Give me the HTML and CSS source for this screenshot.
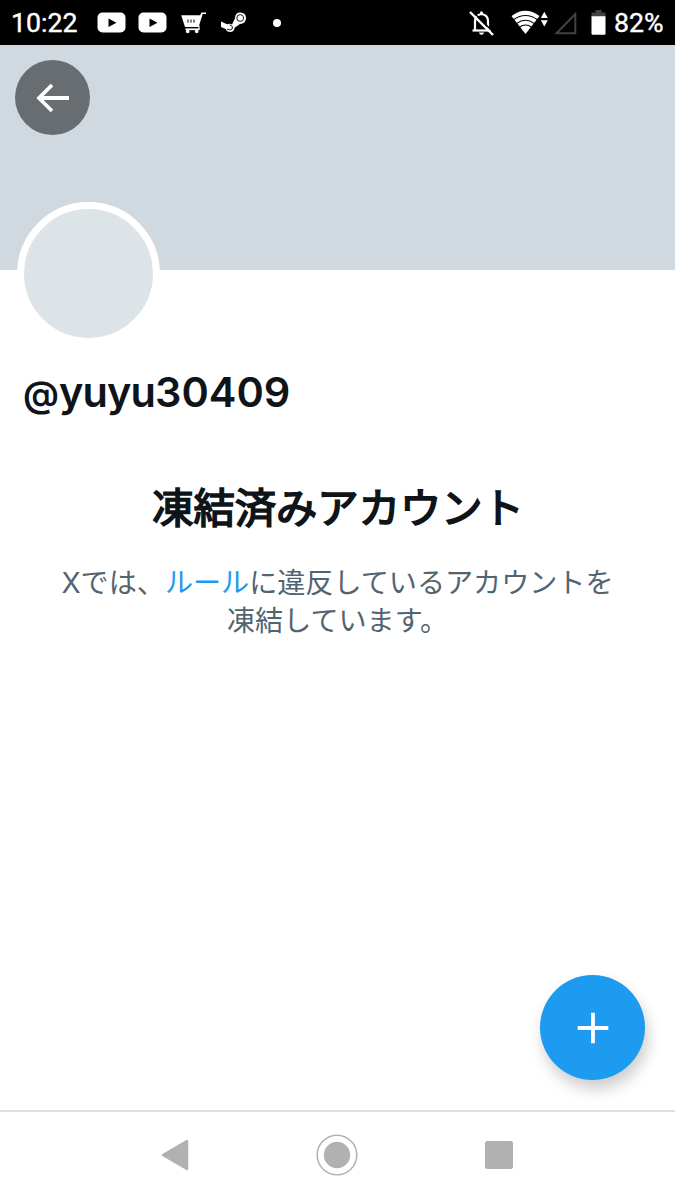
FILE: index.html
```html
<!DOCTYPE html>
<html lang="ja">
<head>
    <meta charset="UTF-8">
    <meta name="viewport" content="width=device-width, initial-scale=1.0">
    <title>@yuyu30409</title>
    <link rel="stylesheet" href="styles.css">
</head>
<body>
    <div class="screen">
        <div class="status-bar">
            <span class="clock">10:22</span>
            <div class="notifications">
                <svg width="29" height="21" viewBox="0 0 29 21">
                    <rect x="0.5" y="0.5" width="28" height="20" rx="5" fill="#fff"/>
                    <path d="M11.5 6.5l8 4.2-8 4.2z" fill="#000"/>
                </svg>
                <svg width="29" height="21" viewBox="0 0 29 21">
                    <rect x="0.5" y="0.5" width="28" height="20" rx="5" fill="#fff"/>
                    <path d="M11.5 6.5l8 4.2-8 4.2z" fill="#000"/>
                </svg>
                <svg class="cart" width="26" height="22" viewBox="0 0 26 22">
                    <path d="M0.2 3.3H19.2L20.3 0.5H25V2H21.7L17.6 15H4z" fill="#fff"/>
                    <path d="M7 7.5v3.2M10 7.5v3.2M13 7.5v3.2" stroke="#000" stroke-width="1"/>
                    <path d="M4.5 17.3h14" stroke="#fff" stroke-width="1.8"/>
                    <path d="M18 13.5v4" stroke="#fff" stroke-width="1.2"/>
                    <circle cx="6.7" cy="19.4" r="1.8" fill="#fff"/>
                    <circle cx="15.7" cy="19.4" r="1.8" fill="#fff"/>
                </svg>
                <svg class="steam" width="26" height="21" viewBox="0 0 26 21">
                    <path d="M0 9.5L6 12.2Q9 11 11 12.5L14 6.3Q14.2 0.5 19.2 0.5Q25 0.8 25 6Q25 11.5 19 12L13.6 15.8Q13.2 20 9.2 20Q5.8 20 4.7 17L0 15z" fill="#fff"/>
                    <circle cx="19.2" cy="6" r="3.4" fill="none" stroke="#000" stroke-width="0.9"/>
                    <path d="M6 17Q9.5 19.3 11.3 16.8Q12.5 13.8 8.7 12.8" fill="none" stroke="#000" stroke-width="0.9"/>
                </svg>
                <span class="dot"></span>
            </div>
            <div class="system-icons">
                <svg class="bell" width="26" height="26" viewBox="0 0 26 26">
                    <path d="M6 20V11Q6 5 12.5 4Q19 5 19 11V20" fill="none" stroke="#fff" stroke-width="2.2"/>
                    <path d="M3.5 20.5H22" stroke="#fff" stroke-width="2.2"/>
                    <path d="M11 4V2.6Q12.5 0 14 2.6V4zM10 22.5H15Q14.8 24.8 12.5 24.8T10 22.5z" fill="#fff"/>
                    <path d="M2.8 0.5L26 23.8" stroke="#000" stroke-width="1.6"/>
                    <path d="M1 2L24 25" stroke="#fff" stroke-width="2.4"/>
                </svg>
                <svg class="wifi" width="37" height="25" viewBox="0 0 37 25">
                    <path d="M0.5 6Q14.5 -4.5 28.5 6L14.5 24z" fill="#fff"/>
                    <path d="M2.5 9.8Q14.5 1.2 26.5 9.8M5.5 13.6Q14.5 7 23.5 13.6M8.3 17.2Q14.5 12.8 20.7 17.2" fill="none" stroke="#000" stroke-width="1.1"/>
                    <path d="M29.8 8l3.5-6.2 3.5 6.2zM29.8 10.3h7l-3.5 6.2z" fill="#fff"/>
                </svg>
                <svg class="signal" width="23" height="24" viewBox="0 0 23 24">
                    <path d="M2.5 22.2H21.3V3z" fill="none" stroke="#424242" stroke-width="2"/>
                </svg>
                <svg class="battery" width="15" height="25" viewBox="0 0 15 25">
                    <path d="M4.5 0h6v2.5H14.5V7H0.5V2.5h4z" fill="#424242"/>
                    <path d="M0.5 6.3h14V23.5Q14.5 24.7 13.3 24.7H1.7Q0.5 24.7 0.5 23.5z" fill="#fff"/>
                </svg>
                <span class="percent">82%</span>
            </div>
        </div>

        <div class="banner">
            <button class="back" aria-label="戻る">
                <svg width="34" height="30" viewBox="0 0 34 30">
                    <path d="M33 15H3M16 2L3 15L16 28" fill="none" stroke="#fff" stroke-width="3.8"/>
                </svg>
            </button>
        </div>
        <div class="avatar"></div>
        <h1 class="handle"><span class="at">@</span><span class="name">yuyu</span>30409</h1>

        <div class="notice">
            <h2>凍結済みアカウント</h2>
            <p>Xでは、<a class="rules">ルール</a>に違反しているアカウントを<br>凍結しています。</p>
        </div>

        <button class="fab" aria-label="追加">
            <svg width="32" height="32" viewBox="0 0 32 32">
                <path d="M16 0.7V31.3M0.7 16H31.3" stroke="#fff" stroke-width="3.8"/>
            </svg>
        </button>

        <div class="nav-bar">
            <svg width="28" height="32" viewBox="0 0 28 32">
                <path d="M2 16L26 2V30z" fill="#b1b1b1" stroke="#b1b1b1" stroke-width="2.5" stroke-linejoin="round"/>
            </svg>
            <svg width="42" height="42" viewBox="0 0 42 42">
                <circle cx="21" cy="21" r="19.8" fill="none" stroke="#b1b1b1" stroke-width="1.5"/>
                <circle cx="21" cy="21" r="13.2" fill="#b1b1b1"/>
            </svg>
            <svg width="28" height="28" viewBox="0 0 28 28">
                <rect width="28" height="28" rx="2.5" fill="#b1b1b1"/>
            </svg>
        </div>
    </div>
</body>
</html>
```

FILE: styles.css
```css
* {
    box-sizing: border-box;
}
body {
    margin: 0;
    background-color: #fff;
    font-family: Inter, "Noto Sans CJK JP", sans-serif;
}
svg {
    display: block;
    flex-shrink: 0;
}
button {
    display: flex;
    align-items: center;
    justify-content: center;
    padding: 0;
    border: none;
    border-radius: 50%;
}
.screen {
    position: relative;
    display: flex;
    flex-direction: column;
    height: 1200px;
    overflow: hidden;
}
.status-bar {
    display: flex;
    align-items: center;
    height: 45px;
    padding: 0 12px 0 11px;
    background-color: #000;
    color: #fff;
    font-family: Roboto, sans-serif;
    font-size: 26.7px;
    font-weight: 400;
    -webkit-text-stroke: 0.4px #fff;
}
.clock {
    width: 86px;
    padding-top: 1px;
}
.notifications {
    display: flex;
    align-items: center;
    gap: 12px;
}
.cart {
    margin-left: 2px;
}
.steam {
    margin-left: 2px;
}
.dot {
    width: 8px;
    height: 8px;
    margin-left: 14px;
    border-radius: 50%;
    background-color: #fff;
}
.system-icons {
    display: flex;
    align-items: center;
    margin-left: auto;
}
.wifi {
    margin-left: 16px;
}
.signal {
    margin-left: 6px;
}
.battery {
    margin-left: 14px;
}
.percent {
    width: 49px;
    margin-left: 8px;
    padding-top: 1px;
}
.banner {
    height: 225px;
    padding: 15px;
    background-color: #cfd9df;
}
.back {
    width: 75px;
    height: 75px;
    background-color: #676d70;
}
.avatar {
    width: 143px;
    height: 143px;
    margin: -68px 0 0 17px;
    border: 7px solid #fff;
    border-radius: 50%;
    background-color: #dde4e8;
}
.handle {
    margin: 22px 0 0 23px;
    color: #0f1419;
    font-size: 41.5px;
    font-weight: 600;
    line-height: 50px;
}
.at {
    font-size: 36px;
}
.name {
    letter-spacing: -0.9px;
}
.notice {
    margin-top: 59px;
    padding-left: 1px;
    text-align: center;
}
.notice h2 {
    margin: 0;
    color: #0f1419;
    font-size: 41.3px;
    font-weight: 400;
    line-height: 60px;
    -webkit-text-stroke: 1.7px #0f1419;
}
.notice p {
    margin: 27px 1px 0 0;
    color: #536471;
    font-size: 28.1px;
    line-height: 37.5px;
}
.rules {
    color: #1d9bf0;
}
.fab {
    position: absolute;
    top: 975px;
    left: 540px;
    width: 105px;
    height: 105px;
    background-color: #1d9bf0;
    box-shadow: 3px 9px 15px rgba(0, 0, 0, 0.2);
}
.nav-bar {
    display: flex;
    align-items: center;
    justify-content: space-between;
    height: 90px;
    margin-top: auto;
    padding: 0 162px 2px 161px;
    border-top: 2px solid #e0e0e0;
}
```
